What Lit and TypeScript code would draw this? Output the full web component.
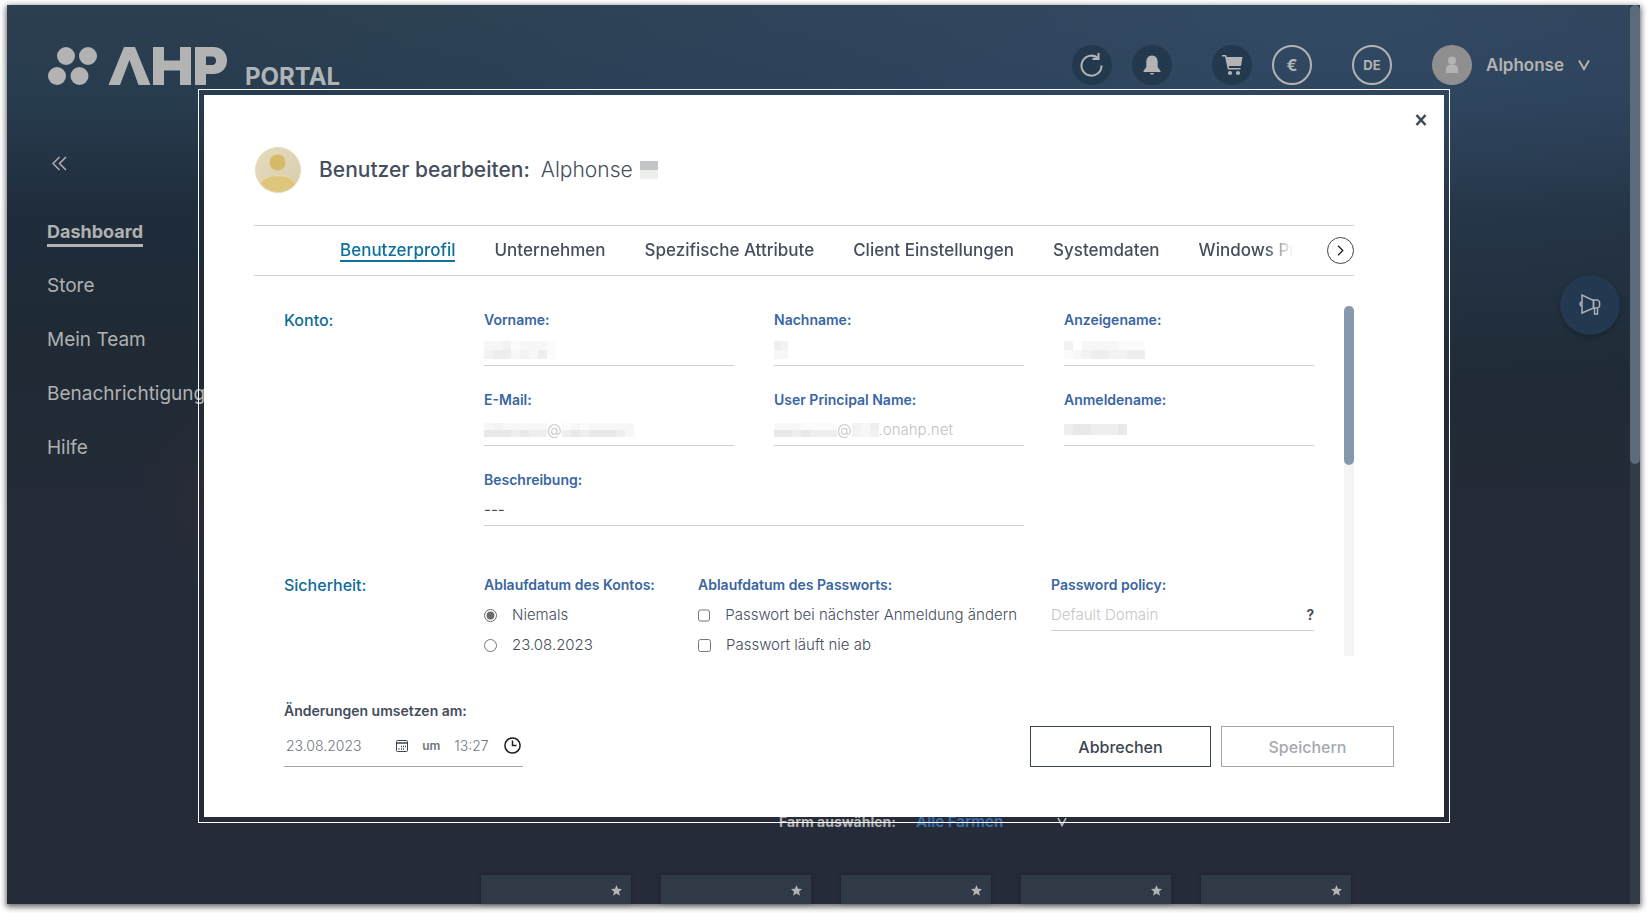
import { LitElement, html, css, svg, nothing } from "lit";
import { customElement } from "lit/decorators.js";

/* Redacted text: a small grid of flat cells, one string per row, one grey tone per character. */
const TONES: Record<string, string> = {
  " ": "none",
  a: "#fbfbfb",
  b: "#f7f7f7",
  c: "#f3f3f3",
  d: "#eeeeee",
  e: "#e8e8e8",
  f: "#c3c6c8",
};

const mosaic = (rows: string[], cw = 9, ch = 9) => {
  const w = rows[0].length * cw;
  const h = rows.length * ch;
  return html`<svg class="mosaic" width=${w} height=${h} viewBox="0 0 ${w} ${h}" shape-rendering="crispEdges" aria-hidden="true">
    ${rows.map((row, y) =>
      [...row].map((t, x) => svg`<rect x=${x * cw} y=${y * ch} width=${cw} height=${ch} fill=${TONES[t]}></rect>`),
    )}
  </svg>`;
};

const chevronDown = html`<svg width="12" height="12" viewBox="0 0 12 12" aria-hidden="true">
  <path d="M1 1.5 6 10 11 1.5" fill="none" stroke="currentColor" stroke-width="2" />
</svg>`;

@customElement("portal-header")
export class PortalHeader extends LitElement {
  static styles = css`
    :host { display: flex; justify-content: space-between; padding: 40px 50px 0 41px; color: #b3b3b3; }
    .brand { display: flex; align-items: flex-end; gap: 17px; height: 42px; }
    .logo { display: block; margin-bottom: 2px; }
    .name { font-size: 24px; line-height: 20px; font-weight: 700; color: #b0b3b5; }
    .tools { display: flex; align-items: center; gap: 40px; height: 40px; }
    .pair { display: flex; gap: 20px; }
    button { border: 0; padding: 0; background: none; color: inherit; font: inherit; cursor: pointer; }
    .round { width: 40px; height: 40px; border-radius: 50%; display: grid; place-items: center; background: #23394d; box-sizing: border-box; }
    .round.ring { background: none; border: 2px solid #b3b3b3; font-size: 13px; font-weight: 700; }
    .round.euro { font-size: 16px; }
    .user { display: flex; align-items: center; gap: 14px; font-size: 17px; font-weight: 600; }
    .face { width: 40px; height: 40px; border-radius: 50%; background: #8f8f8f; display: grid; place-items: center; }
  `;
  render() {
    return html`
      <div class="brand">
        <svg class="logo" width="180" height="38" viewBox="0 0 180 38" role="img" aria-label="AHP">
          <g fill="#b3b3b3">
            <circle cx="18" cy="9" r="9" /><circle cx="40" cy="9" r="9" />
            <circle cx="9" cy="29" r="9" /><circle cx="31.500" cy="29" r="9" />
            <path d="M60.500 38 76 0h11l15.500 38H90.500L81.500 13 72 38z" />
            <path d="M105 0h11v13.500h16V0h11v38h-11V23.500h-16V38h-11z" />
            <path d="M147 0h18c9 0 14 6 14 13.500S174 27 165 27h-7v11h-11zM158 9.500v8.500h6c5.500 0 5.500-8.500 0-8.500z" />
          </g>
        </svg>
        <span class="name">PORTAL</span>
      </div>
      <div class="tools">
        <div class="pair">
          <button class="round" aria-label="Aktualisieren">
            <svg width="24" height="26" viewBox="0 0 24 26" fill="none" stroke="currentColor" stroke-width="2">
              <path d="M21.500 13.500A10 10 0 1 1 18.500 6.500" />
              <path d="M18.500 1v6h-6" />
            </svg>
          </button>
          <button class="round" aria-label="Benachrichtigungen">
            <svg width="18" height="20" viewBox="0 0 18 20" fill="currentColor">
              <path d="M9 .5c-4 0-5.700 3-5.700 6.500V12L.5 16v1h17v-1l-2.800-4V7C14.700 3.500 13 .5 9 .5z" />
              <path d="M7 18h4c0 2-4 2-4 0z" />
            </svg>
          </button>
        </div>
        <div class="pair">
          <button class="round" aria-label="Warenkorb">
            <svg width="21" height="22" viewBox="0 0 21 22" fill="currentColor">
              <path d="M0 1h4l.8 2H20.500l-1.500 9H6.800l.4 2H18.500v1.500H5.800L3 2.500H0z" />
              <circle cx="8" cy="19" r="2.100" /><circle cx="16" cy="19" r="2.100" />
            </svg>
          </button>
          <button class="round ring euro" aria-label="Währung">€</button>
        </div>
        <button class="round ring" aria-label="Sprache">DE</button>
        <button class="user">
          <span class="face">
            <svg width="14" height="18" viewBox="0 0 14 18" fill="#b3b3b3" aria-hidden="true">
              <circle cx="7" cy="4.500" r="4" /><path d="M1 17v-3c0-5 3-5.500 6-5.500s6 .5 6 5.500v3z" />
            </svg>
          </span>
          <span>Alphonse</span>
          ${chevronDown}
        </button>
      </div>
    `;
  }
}

@customElement("portal-nav")
export class PortalNav extends LitElement {
  static styles = css`
    :host { display: block; width: 195px; flex: none; padding: 69px 0 0 40px; box-sizing: border-box; color: #b0b1b1; }
    .fold { display: block; border: 0; background: none; padding: 0 0 0 5px; color: inherit; height: 15px; }
    .fold svg { display: block; }
    nav { display: flex; flex-direction: column; align-items: flex-start; gap: 30px; padding-top: 49px; }
    a { color: inherit; text-decoration: none; font-size: 19px; line-height: 24px; white-space: nowrap; }
    .on { font-size: 18px; font-weight: 700; box-shadow: 0 3px 0 #b3b3b3; }
  `;
  render() {
    return html`
      <button class="fold" aria-label="Menü einklappen">
        <svg width="15" height="15" viewBox="0 0 15 15" fill="none" stroke="currentColor" stroke-width="1.500">
          <path d="M7.500 1 1 7.500 7.500 14M14 1 7.500 7.500 14 14" />
        </svg>
      </button>
      <nav>
        <a class="on" href="#dashboard">Dashboard</a>
        <a href="#store">Store</a>
        <a href="#team">Mein Team</a>
        <a href="#nachrichten">Benachrichtigungen</a>
        <a href="#hilfe">Hilfe</a>
      </nav>
    `;
  }
}

@customElement("farm-tiles")
export class FarmTiles extends LitElement {
  static styles = css`
    :host { flex: 1; min-width: 0; display: flex; flex-direction: column; justify-content: flex-end; align-items: center; gap: 42px; padding-right: 10px; color: #b3b3b3; }
    .pick { display: flex; align-items: center; gap: 20px; font-size: 14px; line-height: 22px; font-weight: 700; padding-left: 14px; }
    .choice { display: grid; align-items: center; width: 151px; }
    .choice > * { grid-area: 1 / 1; }
    .choice svg { justify-self: end; pointer-events: none; }
    select { appearance: none; border: 0; background: none; color: #3d6ba5; font: inherit; font-size: 15px; padding: 0; }
    .tiles { display: grid; grid-template-columns: repeat(5, 150px); gap: 30px; }
    .tile { height: 29px; background: #303a46; box-shadow: 0 0 4px rgba(0, 0, 0, 0.25); display: flex; justify-content: flex-end; padding: 10px 9px 0 0; box-sizing: border-box; }
  `;
  render() {
    return html`
      <div class="pick">
        <label for="farm">Farm auswählen:</label>
        <span class="choice">
          <select id="farm"><option>Alle Farmen</option></select>
          <svg width="10" height="10" viewBox="0 0 10 10" aria-hidden="true"><path d="M1 1 5 8.500 9 1" fill="none" stroke="currentColor" stroke-width="1.600" /></svg>
        </span>
      </div>
      <div class="tiles">
        ${[1, 2, 3, 4, 5].map(
          () => html`<div class="tile">
            <svg width="11" height="11" viewBox="0 0 11 11" fill="#b3b3b3" aria-hidden="true">
              <path d="M5.500 0 7 3.800l4 .3-3 2.600.9 4.100-3.400-2.200-3.400 2.200.9-4.100-3-2.600 4-.3z" />
            </svg>
          </div>`,
        )}
      </div>
    `;
  }
}

@customElement("user-dialog")
export class UserDialog extends LitElement {
  static styles = css`
    :host { flex: 1; min-width: 0; display: flex; flex-direction: column; box-sizing: border-box; padding: 52px 50px 50px; background: #fff; outline: 1px solid #fff; outline-offset: 5px; color: #444e5c; position: relative; }
    button, input { font: inherit; color: inherit; }
    input { min-width: 0; }
    .close { position: absolute; top: 17px; right: 15px; width: 16px; height: 16px; border: 0; padding: 0; background: none; display: grid; place-items: center; }
    header { display: flex; align-items: center; height: 46px; padding-left: 1px; }
    h1 { margin: 0 0 0 18px; font-size: 21px; line-height: 26px; font-weight: 500; display: flex; align-items: center; gap: 7px; }
    .who { font-weight: 300; padding-left: 4px; }
    .mosaic { display: block; flex: none; }

    .tabs { display: flex; align-items: center; margin: 32px 40px 0 0; height: 51px; box-sizing: border-box; border: 1px solid #cfcfcf; border-width: 1px 0; }
    .strip { flex: 1; min-width: 0; display: flex; gap: 39px; margin: 0 34px 0 86px; overflow: hidden; -webkit-mask: linear-gradient(to left, transparent, #000 28px); mask: linear-gradient(to left, transparent, #000 28px); }
    .strip a { color: inherit; text-decoration: none; white-space: nowrap; font-size: 17px; line-height: 20px; font-weight: 500; border-bottom: 2px solid transparent; }
    .strip a.on { color: #0c719c; border-bottom-color: #0c719c; }
    .next { width: 27px; height: 27px; border-radius: 50%; border: 1px solid #3b4452; background: #fff; padding: 0; display: grid; place-items: center; }

    .body { flex: 1; min-height: 0; display: flex; margin: 30px 40px 45px 30px; }
    .form { flex: 1; min-width: 0; padding: 4px 30px 0 0; overflow: hidden; display: flex; flex-direction: column; gap: 49px; }
    section { display: grid; grid-template-columns: 200px minmax(0, 1fr); }
    h2 { margin: 0; font-size: 16px; line-height: 20px; font-weight: 500; color: #0e6c97; }
    .grid { display: grid; grid-template-columns: repeat(3, minmax(0, 1fr)); gap: 24px 40px; }
    .wide { grid-column: span 2; }
    .track { width: 10px; background: #f5f5f5; }
    .thumb { height: 159px; border-radius: 5px; background: #8598ac; }
    .cap { display: block; font-size: 14px; line-height: 20px; font-weight: 600; color: #3a66a1; white-space: nowrap; padding: 0; }
    .line { display: flex; align-items: center; height: 36px; padding-top: 4px; box-sizing: border-box; border-bottom: 1px solid #cfcfcf; font-size: 15px; color: #c0c2c4; font-weight: 300; }
    .line input { flex: 1; border: 0; padding: 0; background: none; outline: none; height: 20px; }
    .dark { color: #444e5c; font-weight: 400; }
    .light { color: #c4c6c8; font-weight: 300; }
    .help { border: 0; background: none; padding: 0; font-size: 14px; font-weight: 600; color: #3b4452; }

    .security { display: grid; grid-template-columns: 180px 319px minmax(0, 1fr); column-gap: 34px; }
    fieldset { border: 0; margin: 0; padding: 0; min-width: 0; }
    .options { display: flex; flex-direction: column; padding-top: 10px; gap: 10px; }
    .options label { display: flex; align-items: center; font-size: 15px; line-height: 20px; font-weight: 300; white-space: nowrap; }
    .options input { width: 13px; height: 13px; margin: 0 15px 0 0; accent-color: #6b6b6b; }

    footer { display: flex; justify-content: space-between; align-items: flex-end; padding-left: 30px; }
    .when { display: block; font-weight: 600; font-size: 14px; line-height: 20px; }
    .stamp { display: flex; align-items: center; width: 239px; height: 46px; padding: 4px 2px 0 2px; box-sizing: border-box; border-bottom: 1px solid #a6a6a6; font-size: 14px; color: #6d7580; }
    .stamp input { border: 0; padding: 0; background: none; font-weight: 300; }
    .date { width: 111px; }
    .time { width: 36px; margin: 0 14px; }
    .um { margin-left: 14px; font-size: 12px; font-weight: 600; }
    .stamp svg { display: block; flex: none; }
    .actions { display: flex; gap: 10px; }
    .btn { height: 41px; width: 181px; background: #fff; border: 1px solid #3b4452; padding: 0; font-size: 16px; line-height: 20px; font-weight: 500; color: #3b4452; }
    .btn:disabled { width: 173px; border-color: #a5a9af; color: #a5a9af; }
  `;

  private field(id: string, label: string, prefix: unknown, value = "", cls = "") {
    return html`<div class=${cls}>
      <label class="cap" for=${id}>${label}</label>
      <div class="line ${cls ? "dark" : ""}">${prefix}<input id=${id} type="text" .value=${value} /></div>
    </div>`;
  }

  render() {
    const tabs = ["Benutzerprofil", "Unternehmen", "Spezifische Attribute", "Client Einstellungen", "Systemdaten", "Windows Profil"];
    return html`
      <button class="close" aria-label="Schließen">
        <svg width="12" height="12" viewBox="0 0 12 12"><path d="M1.500 1 10.500 11M10.500 1 1.500 11" stroke="#3b4a5a" stroke-width="2.600" fill="none" /></svg>
      </button>
      <header>
        <svg width="46" height="46" viewBox="0 0 46 46" aria-hidden="true">
          <defs>
            <linearGradient id="disc" x1="0" y1="0" x2="1" y2="1"><stop offset="0" stop-color="#e6dcbd" /><stop offset="1" stop-color="#d6ccae" /></linearGradient>
            <clipPath id="cut"><circle cx="23" cy="23" r="22" /></clipPath>
          </defs>
          <circle cx="23" cy="23" r="22.500" fill="url(#disc)" stroke="#e4dab9" />
          <circle cx="22.500" cy="15.500" r="8" fill="#d5bb68" />
          <ellipse cx="23" cy="42" rx="20" ry="13.500" fill="#dec77c" stroke="#ead9a0" clip-path="url(#cut)" />
        </svg>
        <h1>Benutzer bearbeiten: <span class="who">Alphonse</span> ${mosaic(["ff", "dd"])}</h1>
      </header>
      <div class="tabs">
        <div class="strip">${tabs.map((t, i) => html`<a class=${i === 0 ? "on" : nothing} href="#tab-${i}">${t}</a>`)}</div>
        <button class="next" aria-label="Weitere Tabs">
          <svg width="7" height="11" viewBox="0 0 7 11"><path d="M1 .8 5.800 5.500 1 10.200" fill="none" stroke="#222" stroke-width="1.300" /></svg>
        </button>
      </div>
      <div class="body">
        <div class="form">
          <section>
            <h2>Konto:</h2>
            <div class="grid">
              ${this.field("vorname", "Vorname:", mosaic(["bbcabbba", "cddbcbda"]))}
              ${this.field("nachname", "Nachname:", mosaic(["dc", "bb"], 7, 9))}
              ${this.field("anzeige", "Anzeigename:", mosaic(["c bbbbaaa", "abcddccdd"]))}
              ${this.field("mail", "E-Mail:", html`${mosaic(["bcbbbbb", "eeededd"], 9, 7)}@${mosaic(["ababbbbb", "dedeeedb"], 9, 7)}`)}
              ${this.field("upn", "User Principal Name:", html`${mosaic(["bbbaaaa", "eededdd"], 9, 7)}@${mosaic(["cbd", "cbc"], 9, 7)}`, ".onahp.net")}
              ${this.field("login", "Anmeldename:", mosaic(["deeddde"], 9, 11))}
              ${this.field("text", "Beschreibung:", "", "---", "wide")}
            </div>
          </section>
          <section>
            <h2>Sicherheit:</h2>
            <div class="security">
              <fieldset>
                <legend class="cap">Ablaufdatum des Kontos:</legend>
                <div class="options">
                  <label><input type="radio" name="ablauf" checked />Niemals</label>
                  <label><input type="radio" name="ablauf" />23.08.2023</label>
                </div>
              </fieldset>
              <fieldset>
                <legend class="cap">Ablaufdatum des Passworts:</legend>
                <div class="options">
                  <label><input type="checkbox" />Passwort bei nächster Anmeldung ändern</label>
                  <label><input type="checkbox" />Passwort läuft nie ab</label>
                </div>
              </fieldset>
              <div>
                <label class="cap" for="policy">Password policy:</label>
                <div class="line light">
                  <input id="policy" type="text" .value=${"Default Domain"} />
                  <button class="help" aria-label="Hilfe">?</button>
                </div>
              </div>
            </div>
          </section>
        </div>
        <div class="track"><div class="thumb"></div></div>
      </div>
      <footer>
        <div>
          <label class="when" for="datum">Änderungen umsetzen am:</label>
          <div class="stamp">
            <input class="date" id="datum" type="text" .value=${"23.08.2023"} />
            <svg width="12" height="14" viewBox="0 0 12 14" fill="none" stroke="#3b4452" aria-hidden="true">
              <rect x=".5" y="1.500" width="11" height="11" rx="1" /><path d="M.5 4h11" stroke-width="1.500" />
              <path d="M5 7.500h1M7 7.500h1M9 7.500h1M2.500 10h1M5 10h1M7 10h1" stroke-width="1.400" />
            </svg>
            <label class="um" for="zeit">um</label>
            <input class="time" id="zeit" type="text" .value=${"13:27"} />
            <svg width="17" height="17" viewBox="0 0 17 17" fill="none" stroke="#1d1d1d" stroke-width="1.500" aria-hidden="true">
              <circle cx="8.500" cy="8.500" r="7.600" /><path d="M8.500 3.500v5h4" />
            </svg>
          </div>
        </div>
        <div class="actions">
          <button class="btn">Abbrechen</button>
          <button class="btn" disabled>Speichern</button>
        </div>
      </footer>
    `;
  }
}

@customElement("app-root")
export class AppRoot extends LitElement {
  static styles = css`
    :host { display: flex; box-sizing: border-box; height: 100vh; padding: 5px 9px 9px 7px; background: #fff; font-family: Inter, "Open Sans", sans-serif; overflow: hidden; }
    .window {
      position: relative; flex: 1; min-width: 0; display: flex; flex-direction: column; box-shadow: 0 2px 6px 1px rgba(0, 0, 0, 0.6);
      background:
        radial-gradient(ellipse 60px 100px at 195px 480px, rgba(52, 46, 54, 0.25), transparent),
        radial-gradient(ellipse 1100px 380px at 80% 20px, rgba(58, 84, 118, 0.5), transparent),
        linear-gradient(#2c3f50 0, #283c50 90px, #1f2c3a 210px, #1f2a35 340px, #252b38 510px);
    }
    .row { flex: 1; min-height: 0; display: flex; }
    .scroll { position: absolute; top: 0; right: 0; bottom: 0; width: 10px; background: #323b48; }
    .thumb { height: 459px; border-radius: 5px; background: #5c6b79; }
    .mega { position: absolute; right: 20px; top: 270px; width: 60px; height: 60px; border: 0; border-radius: 50%; background: #22394f; box-shadow: 0 2px 5px rgba(0, 0, 0, 0.25); display: grid; place-items: center; }
    .overlay { position: absolute; inset: 0; display: flex; padding: 90px 196px 87px 197px; }
  `;
  render() {
    return html`
      <div class="window">
        <portal-header></portal-header>
        <div class="row">
          <portal-nav></portal-nav>
          <farm-tiles></farm-tiles>
        </div>
        <div class="scroll"><div class="thumb"></div></div>
        <div class="overlay"><user-dialog role="dialog" aria-label="Benutzer bearbeiten"></user-dialog></div>
        <button class="mega" aria-label="Feedback">
          <svg width="22" height="22" viewBox="0 0 22 22" fill="none" stroke="#a9afb4" stroke-width="1.500">
            <path d="M3 1v18L14.500 14V6.500z" /><path d="M3 8c-2.500 0-2.500 4 0 4" />
            <path d="M14.500 6h4l2 1.500v5L18.500 14h-4zM15.500 14v6h3v-6" />
          </svg>
        </button>
      </div>
    `;
  }
}
